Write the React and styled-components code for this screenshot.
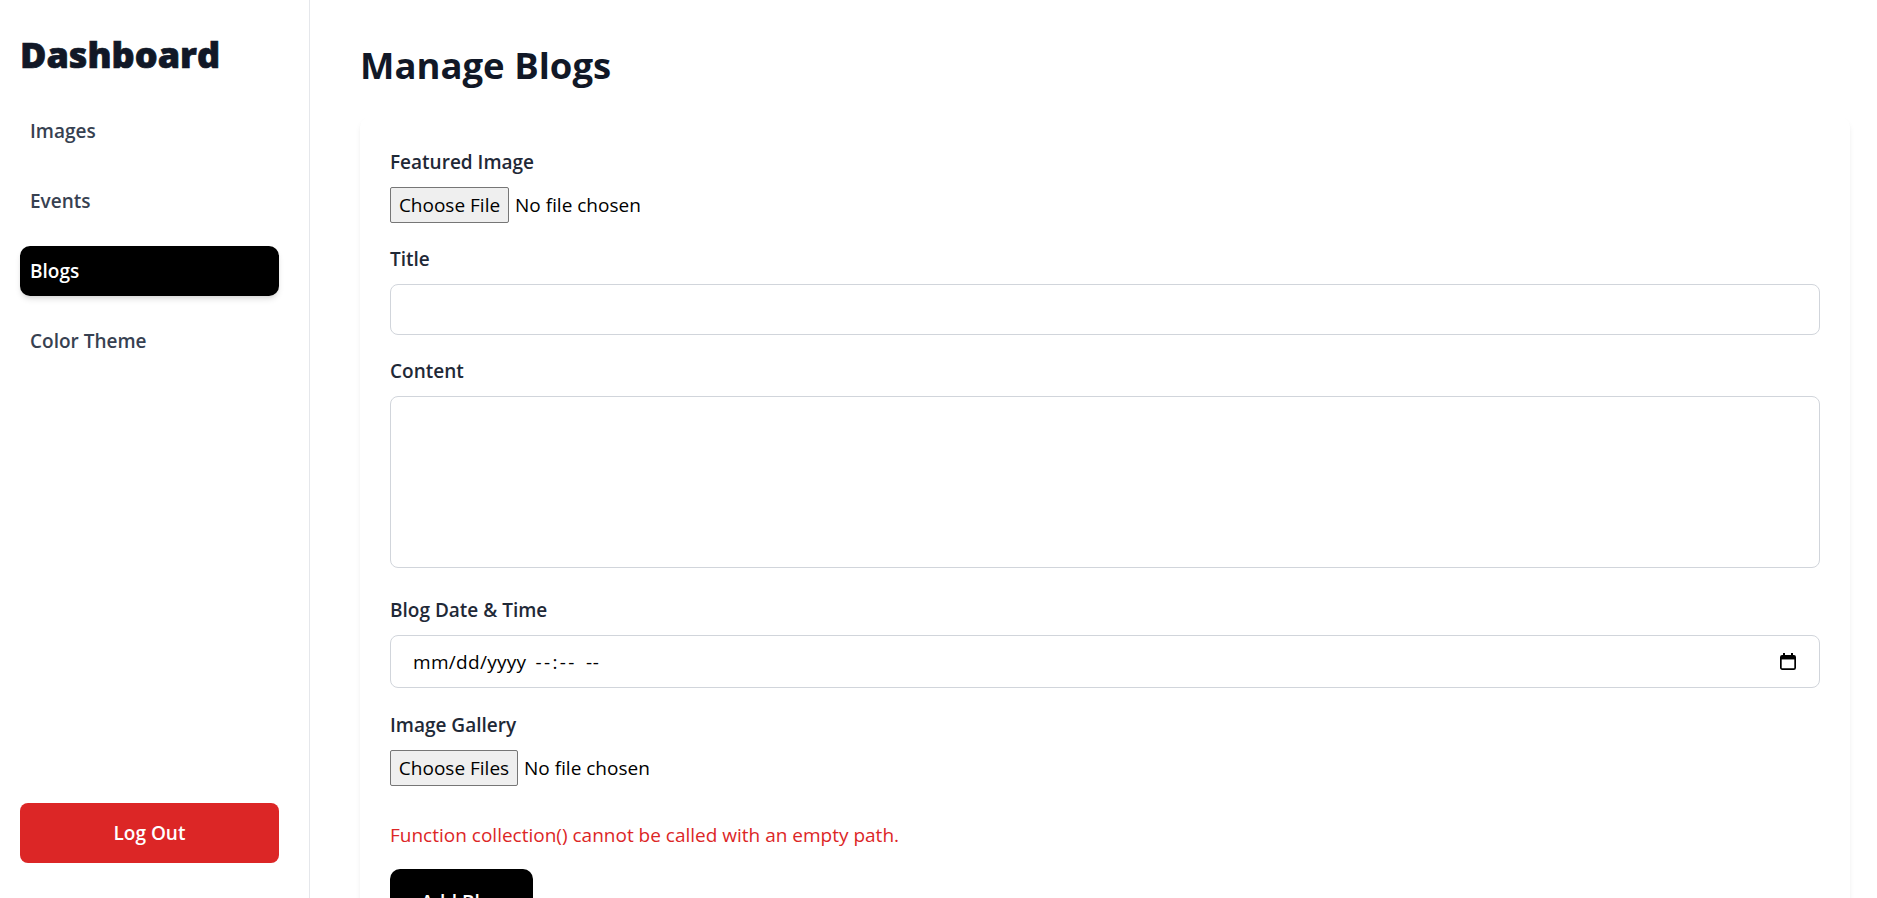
import React from "react";
import styled, { createGlobalStyle } from "styled-components";

const GlobalStyle = createGlobalStyle`
  html, body {
    margin: 0;
    padding: 0;
    background: #ffffff;
  }
  body {
    font-family: "Open Sans", "Noto Sans", sans-serif;
    color: #111827;
  }
  * { box-sizing: border-box; }
`;

const Layout = styled.div`
  display: flex;
  height: 100vh;
  overflow: hidden;
`;

const Sidebar = styled.aside`
  width: 310px;
  flex-shrink: 0;
  height: 100vh;
  border-right: 1px solid #e5e7eb;
  padding: 32px 30px 35px 20px;
  display: flex;
  flex-direction: column;
  justify-content: space-between;
  background: #ffffff;
`;

const Brand = styled.h2`
  margin: 0 0 29px;
  font-size: 36px;
  line-height: 45px;
  font-weight: 800;
  color: #111827;
  -webkit-text-stroke: 0.7px #111827;
`;

const Nav = styled.nav`
  display: flex;
  flex-direction: column;
  gap: 20px;
`;

const NavItem = styled.a`
  display: block;
  height: 50px;
  padding: 10px 10px;
  font-size: 19px;
  line-height: 30px;
  font-weight: 600;
  color: ${(p) => (p.$active ? "#ffffff" : "#374151")};
  background: ${(p) => (p.$active ? "#000000" : "transparent")};
  border-radius: 10px;
  text-decoration: none;
  cursor: pointer;
  box-shadow: ${(p) =>
    p.$active
      ? "0 4px 6px -1px rgba(0,0,0,0.12), 0 2px 4px -2px rgba(0,0,0,0.1)"
      : "none"};
`;

const LogoutButton = styled.button`
  width: 100%;
  height: 60px;
  border: none;
  border-radius: 8px;
  background: #dc2626;
  color: #ffffff;
  font-family: inherit;
  font-size: 19px;
  font-weight: 600;
  line-height: 30px;
  cursor: pointer;
`;

const Main = styled.main`
  flex: 1;
  min-width: 0;
  padding: 43px 27px 40px 50px;
  overflow-y: auto;
  scrollbar-width: none;
  &::-webkit-scrollbar { display: none; }
`;

const PageTitle = styled.h1`
  margin: 0 0 29px;
  font-size: 36.5px;
  line-height: 45px;
  font-weight: 700;
  color: #111827;
`;

const Card = styled.section`
  background: #ffffff;
  border-radius: 10px;
  padding: 30px 30px 30px;
  box-shadow: 0 4px 6px -1px rgba(0, 0, 0, 0.08), 0 2px 4px -2px rgba(0, 0, 0, 0.06);
`;

const Form = styled.form`
  display: flex;
  flex-direction: column;
`;

const Field = styled.div`
  margin-bottom: ${(p) => p.$mb}px;
`;

const Label = styled.label`
  display: block;
  margin-bottom: 10px;
  font-size: 19px;
  line-height: 30px;
  font-weight: 600;
  color: #1f2937;
`;

const FileInput = styled.input`
  display: block;
  height: 36px;
  font-family: inherit;
  font-size: 19px;
  color: #000000;
  &::file-selector-button {
    width: ${(p) => p.$btnWidth}px;
    height: 36px;
    margin: 0 ${(p) => p.$gap}px 0 0;
    padding: 0;
    border: 1px solid #767676;
    border-radius: 2px;
    background: #efefef;
    color: #000000;
    font-family: inherit;
    font-size: 19px;
    cursor: pointer;
  }
`;

const TextInput = styled.input`
  display: block;
  width: 100%;
  height: 51px;
  padding: 0 20px;
  border: 1px solid #d1d5db;
  border-radius: 8px;
  font-family: inherit;
  font-size: 19px;
  color: #111827;
  background: #ffffff;
  outline: none;
`;

const TextArea = styled.textarea`
  display: block;
  width: 100%;
  height: 172px;
  padding: 10px 20px;
  border: 1px solid #d1d5db;
  border-radius: 8px;
  font-family: inherit;
  font-size: 19px;
  line-height: 30px;
  color: #111827;
  resize: none;
  outline: none;
`;

const DateBox = styled.div`
  display: flex;
  align-items: center;
  height: 53px;
  padding: 0 23px 0 22px;
  border: 1px solid #d1d5db;
  border-radius: 8px;
  background: #ffffff;
  cursor: text;
`;

const DateFields = styled.div`
  flex: 1;
  display: flex;
  align-items: center;
  gap: 9px;
  font-size: 19px;
  line-height: 30px;
  color: #000000;
`;

const DateSegment = styled.span`
  letter-spacing: ${(p) => p.$spacing}px;
`;

const CalendarIcon = () => (
  <svg width="16" height="17" viewBox="0 0 16 17" aria-hidden="true">
    <rect x="3" y="0" width="2" height="3.5" fill="#000" />
    <rect x="11" y="0" width="2" height="3.5" fill="#000" />
    <rect
      x="0.85"
      y="2.85"
      width="14.3"
      height="13.3"
      rx="1.4"
      fill="none"
      stroke="#000"
      strokeWidth="1.7"
    />
    <rect x="0.85" y="2.85" width="14.3" height="3.6" fill="#000" />
  </svg>
);

const ErrorText = styled.p`
  margin: 0 0 19px;
  font-size: 19px;
  line-height: 30px;
  color: #dc2626;
`;

const SubmitButton = styled.button`
  align-self: flex-start;
  width: 143px;
  height: 60px;
  padding: 5px 0 0;
  border: none;
  border-radius: 10px;
  background: #000000;
  color: #ffffff;
  font-family: inherit;
  font-size: 19px;
  font-weight: 600;
  line-height: 30px;
  cursor: pointer;
`;

const navItems = ["Images", "Events", "Blogs", "Color Theme"];

export default function App() {
  return (
    <>
      <GlobalStyle />
      <Layout>
        <Sidebar>
          <div>
            <Brand>Dashboard</Brand>
            <Nav>
              {navItems.map((item) => (
                <NavItem key={item} $active={item === "Blogs"}>
                  {item}
                </NavItem>
              ))}
            </Nav>
          </div>
          <LogoutButton type="button">Log Out</LogoutButton>
        </Sidebar>
        <Main>
          <PageTitle>Manage Blogs</PageTitle>
          <Card>
            <Form onSubmit={(e) => e.preventDefault()}>
              <Field $mb={21}>
                <Label htmlFor="featured">Featured Image</Label>
                <FileInput id="featured" type="file" $btnWidth={119} $gap={6} />
              </Field>
              <Field $mb={21}>
                <Label htmlFor="title">Title</Label>
                <TextInput id="title" type="text" />
              </Field>
              <Field $mb={27}>
                <Label htmlFor="content">Content</Label>
                <TextArea id="content" />
              </Field>
              <Field $mb={22}>
                <Label>Blog Date &amp; Time</Label>
                <DateBox role="textbox" aria-label="Blog Date & Time">
                  <DateFields>
                    <DateSegment $spacing={0.3}>mm/dd/yyyy</DateSegment>
                    <DateSegment $spacing={2.4}>--:--</DateSegment>
                    <DateSegment $spacing={0.8}>--</DateSegment>
                  </DateFields>
                  <CalendarIcon />
                </DateBox>
              </Field>
              <Field $mb={34}>
                <Label htmlFor="gallery">Image Gallery</Label>
                <FileInput id="gallery" type="file" multiple $btnWidth={128} $gap={6} />
              </Field>
              <ErrorText>Function collection() cannot be called with an empty path.</ErrorText>
              <SubmitButton type="submit">Add Blog</SubmitButton>
            </Form>
          </Card>
        </Main>
      </Layout>
    </>
  );
}
